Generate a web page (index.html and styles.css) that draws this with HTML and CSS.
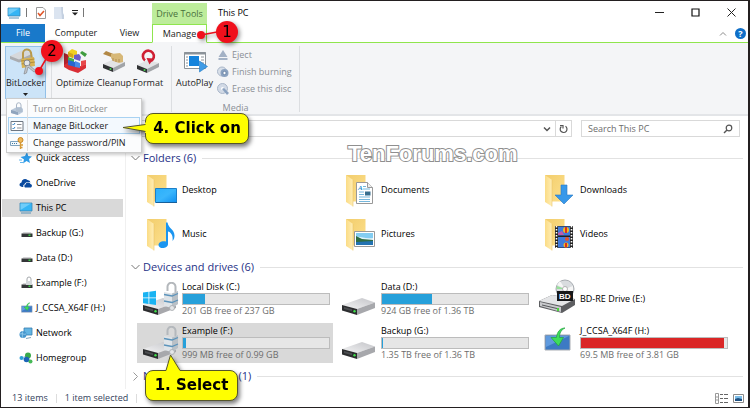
FILE: index.html
```html
<!DOCTYPE html>
<html lang="en">
<head>
	<meta charset="utf-8">
	<meta name="viewport" content="width=device-width, initial-scale=1.0">
	<title>This PC</title>
	<link rel="stylesheet" href="styles.css">
</head>
<body>
	<!-- shared icon parts -->
	<svg class="sprites" width="0" height="0" aria-hidden="true">
		<defs>
			<linearGradient id="flap" x1="0" x2="1" y2="0"><stop offset="0" stop-color="#fbdc85"/><stop offset="1" stop-color="#ffedb5"/></linearGradient>
			<linearGradient id="back" x1="0" x2="1" y1="0" y2="1"><stop offset="0" stop-color="#f2cd6c"/><stop offset="1" stop-color="#fde08d"/></linearGradient>
			<linearGradient id="metal" x1="0" x2="1" y1="1" y2="0"><stop offset="0" stop-color="#f4f4f5"/><stop offset="1" stop-color="#c3c4c8"/></linearGradient>
			<linearGradient id="screen" x1="0" x2="1" y1="0" y2="1"><stop offset="0" stop-color="#2bb0fb"/><stop offset=".5" stop-color="#3ab6fc"/><stop offset="1" stop-color="#0f8ff0"/></linearGradient>
		</defs>
		<symbol id="folder" viewBox="0 0 20 33">
			<path d="M0 1h19.500v26.500H7z" fill="url(#back)"/>
			<path d="M0 1l7 5v26.500L0 28z" fill="url(#flap)"/>
			<path d="M7 6v26.500" stroke="#e9c566" stroke-width=".6"/>
		</symbol>
		<symbol id="drive" viewBox="0 0 34 18">
			<path d="M0 7L20 0l13 4.500L15 11z" fill="url(#metal)"/>
			<path d="M15 11l18-6.500V10l-18 7z" fill="#a7a8ac"/>
			<path d="M0 7l15 4v6L0 12.500z" fill="#2c2d2f"/>
			<path d="M2 9l8 2.200v2L2 11z" fill="#4b4d50"/>
			<circle cx="12.500" cy="13.200" r="1.200" fill="#3ee04a"/>
		</symbol>
		<symbol id="lock" viewBox="0 0 16 30">
			<path d="M4.500 9V5a4 4 0 0 1 8-.5V10" fill="none" stroke="#b4b8bc" stroke-width="2"/>
			<path d="M1 10l8 1.500L15 9v13l-6 4-8-2z" fill="#dfe4e8"/>
			<path d="M9 11.500L15 9v13l-6 4z" fill="#b9c0c6"/>
			<path d="M1 12.500l8 1.500 6-2.500M1 19l8 1.500 6-2.500" fill="none" stroke="#5b93bb" stroke-width="1.300"/>
			<circle cx="9" cy="26" r="2.500" fill="#e4e6e8" stroke="#a4a8ac" stroke-width=".8"/>
		</symbol>
		<symbol id="minidrive" viewBox="0 0 12 12">
			<path d="M1 5.500L2.500 4h7L11 5.500z" fill="#d3d4d6"/>
			<path d="M.5 5.500h11V9H.5z" fill="#333537"/>
			<path d="M7.500 6.500h2V8h-2z" fill="#3cd047"/>
		</symbol>
		<symbol id="install" viewBox="0 0 28 26">
			<path d="M1 8h25v15H1z" fill="#3d7ac4" stroke="#a9adb3"/>
			<path d="M2 9h23L2 20z" fill="#5f9ade"/>
			<path d="M21 1c-5 0-8 4-8.500 9.500H7l7.500 8.500 5-8.500h-4C15.500 6 17 3 21 1z" fill="#3fdc5c" stroke="#1fa43b" stroke-width=".7"/>
		</symbol>
		<symbol id="pc" viewBox="0 0 14 12">
			<path d="M1 1h12v8H1z" fill="#35b5f5" stroke="#3a86b4" stroke-width=".8"/>
			<path d="M1.500 1.500H12L1.500 8z" fill="#6fcdfa"/>
			<path d="M2 11h10" stroke="#5a91b5"/>
		</symbol>
	</svg>

	<div class="window">
		<header class="caption">
			<div class="quick-access">
				<svg width="14" height="12"><use href="#pc"/></svg>
				<i class="bar"></i>
				<button type="button" aria-label="Properties">
					<svg width="10" height="12" viewBox="0 0 10 12"><path d="M.5.500h6.500l2.500 2.500v8.500H.5z" fill="#fff" stroke="#9a9a9a"/><path d="M2 6l2 2.500L8 4" fill="none" stroke="#e0562a" stroke-width="1.600"/></svg>
				</button>
				<button type="button" aria-label="New folder">
					<svg width="10" height="12" viewBox="0 0 10 12"><path d="M0 0h7l3 8v4H0z" fill="#dbe4f0"/><path d="M7 0h2v7l1 1v4H8z" fill="#c4d0e0"/></svg>
				</button>
				<button type="button" aria-label="Customize">
					<svg width="6" height="6" viewBox="0 0 6 6"><path d="M0 .5h6" stroke="#222"/><path d="M0 2.500h6L3 5.500z" fill="#222"/></svg>
				</button>
				<i class="bar"></i>
			</div>
			<div class="context-title">Drive Tools</div>
			<h1 class="title">This PC</h1>
			<div class="controls">
				<button type="button" aria-label="Minimize"><svg width="9" height="9"><path d="M0 4.500h9" stroke="#222"/></svg></button>
				<button type="button" aria-label="Maximize"><svg width="9" height="9"><path d="M1 1h7v7H1z" fill="none" stroke="#111" stroke-width="1.200"/></svg></button>
				<button type="button" aria-label="Close"><svg width="9" height="9"><path d="M.5.500l8 8M8.500.500l-8 8" stroke="#222"/></svg></button>
			</div>
			<button type="button" class="tab file">File</button>
			<button type="button" class="tab">Computer</button>
			<button type="button" class="tab">View</button>
			<button type="button" class="tab active">Manage</button>
			<div class="filler"></div>
			<div class="help">
				<button type="button" aria-label="Collapse ribbon"><svg width="8" height="5"><path d="M1 4.500l3-3 3 3" fill="none" stroke="#8a8a8a"/></svg></button>
				<button type="button" class="help-button">?</button>
			</div>
		</header>

		<div class="ribbon">
			<div class="group">
				<div class="dropdown">
					<button type="button" class="big pressed">
						<svg width="34" height="28" viewBox="0 0 34 28">
							<path d="M1 8l13-6 9 3v5L10 14l-9-4z" fill="#d6d8db"/>
							<path d="M1 8l9 3.500L23 6v4l-13 4.500L1 11z" fill="#a9acb0"/>
							<path d="M14 12V6a4 4 0 0 1 8-1l1 6" fill="none" stroke="#b99a4d" stroke-width="2"/>
							<path d="M12 11l13-2 1 9-13 2z" fill="#d9b455"/>
							<path d="M12 13l13.500-2M12.500 16l13.500-2" stroke="#a98635" stroke-width=".8"/>
							<circle cx="18" cy="15" r="3" fill="#e3e5e8" stroke="#85888d"/>
							<path d="M17 18l-2 8 2.500-1 1.500-6 6 5 2-1-7-6z" fill="#c4c7cb" stroke="#85888d" stroke-width=".7"/>
						</svg>
						<span>BitLocker</span>
						<svg width="5" height="3"><path d="M0 0h5L2.500 3z" fill="#222"/></svg>
					</button>
					<div class="menu" role="menu">
						<button type="button" role="menuitem" disabled>
							<svg width="14" height="14" viewBox="0 0 14 14"><path d="M1 8l6-3h4l2 2v3l-5 3-7-2z" fill="#b9c8da"/><path d="M1 8l7 2v3l-7-2z" fill="#8fa4bd"/><path d="M6.500 6V3a2 2 0 0 1 4.500 0v3" fill="none" stroke="#a9b6c6"/><path d="M6 6h6v4H6z" fill="#b0bfd0"/></svg>
							<span>Turn on BitLocker</span>
						</button>
						<button type="button" role="menuitem" class="hover">
							<svg width="14" height="14" viewBox="0 0 14 14"><path d="M1 2.500h12v9H1z" fill="#fff" stroke="#6d7782"/><path d="M2.500 5l1 1L5 4M2.500 9l1 1L5 8" fill="none" stroke="#3281c4"/><path d="M7 5.500h4.500M7 9h4.500" stroke="#8b8f94"/></svg>
							<span>Manage BitLocker</span>
						</button>
						<button type="button" role="menuitem">
							<svg width="14" height="14" viewBox="0 0 14 14"><path d="M.5 5.500h10v4H.5z" fill="#f4f8fb" stroke="#7da2be"/><path d="M2 7.500h1M4 7.500h1M6 7.500h1" stroke="#3a79a5"/><circle cx="10.500" cy="4" r="2.500" fill="#f0b95a" stroke="#c98925"/><path d="M10.500 6.500V13M10 9h3M10 11.500h2.500" stroke="#d79a35" stroke-width="1.400"/></svg>
							<span>Change password/PIN</span>
						</button>
					</div>
				</div>
			</div>
			<div class="group">
				<button type="button" class="big optimize">
					<svg width="28" height="28" viewBox="0 0 28 28">
						<path d="M3 5l5 2v14l-5-3z" fill="#b5222e"/><path d="M3 17l5-3 9 5 8-3v4l-8 5-9-3-5-3z" fill="#d92e35"/>
						<path d="M7 4l4-3 5 2v5l-4 2-5-2z" fill="#f0cf22"/><path d="M7 4l5 2v4l-5-2z" fill="#d0a51c"/>
						<path d="M7 9l6 2v5l-6-2z" fill="#43b04a"/><path d="M7 12l7 2v5l-7-2z" fill="#2867cf"/>
						<path d="M13 7l5-1 2 3-1 4-6-2z" fill="#6b5cc9"/><path d="M14 13l5 2v5l-5-1z" fill="#4a8ae6"/>
						<path d="M19 5l2-2 5 3-2 3z" fill="#3f9c3f"/><path d="M20 13l5-1v4l-5 3z" fill="#e7484a"/>
					</svg>
					<span>Optimize</span>
				</button>
				<button type="button" class="big cleanup">
					<svg width="28" height="28" viewBox="0 0 28 28">
						<path d="M3 16l11-5 11 3-12 6z" fill="#e2e3e5"/><path d="M3 16l10 4v4L3 20z" fill="#313335"/><path d="M13 20l12-6v4l-12 6z" fill="#a1a4a8"/><circle cx="10.500" cy="21" r="1" fill="#43d84d"/>
						<path d="M3 6l3-3 10 4-2 3z" fill="#b28845"/><path d="M11 6l9-1 3 3v6l-4 1-6-2-2-3z" fill="#d7b878"/><path d="M13 13v-3M16 14v-3M19 14v-3" stroke="#a8854a" stroke-width=".8"/>
					</svg>
					<span>Cleanup</span>
				</button>
				<button type="button" class="big format">
					<svg width="28" height="28" viewBox="0 0 28 28">
						<path d="M3 17l11-5 11 3-12 6z" fill="#e2e3e5"/><path d="M3 17l10 4v4L3 21z" fill="#313335"/><path d="M13 21l12-6v4l-12 6z" fill="#a1a4a8"/><circle cx="10.500" cy="22" r="1" fill="#43d84d"/>
						<path d="M11 12.500a5.500 5.500 0 1 1 6 .5" fill="none" stroke="#cf1f33" stroke-width="2.600"/><path d="M12.500 10l7 .5-4 6z" fill="#cf1f33"/>
					</svg>
					<span>Format</span>
				</button>
			</div>
			<div class="group media">
				<div class="commands">
					<button type="button" class="big autoplay">
						<svg width="28" height="28" viewBox="0 0 28 28">
							<path d="M3.500 4.500h21v16h-21z" fill="#fff" stroke="#8b9299"/><path d="M3 5.500h22" stroke="#8b9299" stroke-width="2"/>
							<path d="M5 9h2M5 12h2M5 15h2M5 18h2M20 9h3M20 12h3M20 15h3" stroke="#8b9299"/>
							<path d="M8 8h10v10H8z" fill="#1583dc"/><path d="M18.500 13v11l8-5.500z" fill="#3f9be6" stroke="#2079c5" stroke-width=".6"/>
						</svg>
						<span>AutoPlay</span>
					</button>
					<div class="small-list">
						<button type="button" disabled>
							<svg width="12" height="12" viewBox="0 0 12 12"><path d="M6 1l4.500 7h-9zM1.500 9h9v2h-9z" fill="#a3b1c5"/></svg>
							<span>Eject</span>
						</button>
						<button type="button" disabled>
							<svg width="12" height="12" viewBox="0 0 12 12"><circle cx="5" cy="5.500" r="4.500" fill="#d8dfe9" stroke="#a9b6c8"/><circle cx="7.500" cy="7" r="4" fill="#8ba2c0"/><circle cx="7.500" cy="7" r="1.700" fill="#fff" stroke="#6c86a8"/></svg>
							<span>Finish burning</span>
						</button>
						<button type="button" disabled>
							<svg width="12" height="12" viewBox="0 0 12 12"><circle cx="5.500" cy="5.500" r="5" fill="#d2dae6" stroke="#a9b6c8"/><circle cx="5.500" cy="5.500" r="1.500" fill="#fff"/><path d="M5 6l2-1 5 5-2 2z" fill="#8ba2c0"/></svg>
							<span>Erase this disc</span>
						</button>
					</div>
				</div>
				<div class="group-label">Media</div>
			</div>
		</div>

		<div class="address-row">
			<div class="address">
				<button type="button" aria-label="Previous locations"><svg width="8" height="6"><path d="M1 1.500l3 3 3-3" fill="none" stroke="#555" stroke-width="1.500"/></svg></button>
				<button type="button" class="refresh" aria-label="Refresh"><svg width="9" height="10" viewBox="0 0 9 10"><path d="M6.500 2.300A3.400 3.400 0 1 1 2.400 2.500" fill="none" stroke="#555" stroke-width="1.200"/><path d="M1 1.500h3v3" fill="none" stroke="#555" stroke-width="1.200"/></svg></button>
			</div>
			<label class="search">
				<input type="search" placeholder="Search This PC" aria-label="Search This PC">
				<svg width="10" height="10"><circle cx="6" cy="4" r="2.800" fill="none" stroke="#555" stroke-width="1.200"/><path d="M4 6L1 9" stroke="#555" stroke-width="1.500"/></svg>
			</label>
		</div>

		<div class="body">
			<nav class="tree">
				<a href="#"><svg width="14" height="14" viewBox="0 0 14 14"><path d="M8 1l1.200 4L13 5.500 10 8l1 4-3.500-2L4 12.500l1-4L1.500 6 6 5z" fill="#2d9be8"/><path d="M0 9h3M1 11.500h3" stroke="#62b5ee"/></svg>Quick access</a>
				<a href="#"><svg width="14" height="14" viewBox="0 0 14 14"><path d="M1 10a2.200 2.200 0 0 1 1.500-3.500A3.500 3.500 0 0 1 8.500 4a3 3 0 0 1 3 2.500c-4-1.500-6 1-6 2-1.500.5-1.500 1.500-1 2.500H3z" fill="#0a4a9f"/><path d="M6 11.500a1.700 1.700 0 0 1 .5-3A2.700 2.700 0 0 1 11.500 8a1.900 1.900 0 0 1 .5 3.500z" fill="#0a4a9f"/></svg>OneDrive</a>
				<a href="#" class="selected"><svg width="14" height="14" viewBox="0 0 14 12"><use href="#pc"/></svg>This PC</a>
				<a href="#"><svg width="14" height="14"><use href="#minidrive" x="2" y="2" width="12" height="12"/></svg>Backup (G:)</a>
				<a href="#"><svg width="14" height="14"><use href="#minidrive" x="2" y="2" width="12" height="12"/></svg>Data (D:)</a>
				<a href="#"><svg width="14" height="14"><use href="#minidrive" x="2" y="3" width="12" height="12"/><path d="M8 6V3a2 2 0 0 1 4 0v3" fill="none" stroke="#a5a9ad"/><path d="M7 5h6v4H7z" fill="#d4d8db"/></svg>Example (F:)</a>
				<a href="#"><svg width="14" height="14"><use href="#install" x="2" y="1" width="12" height="12"/></svg>J_CCSA_X64F (H:)</a>
				<a href="#"><svg width="14" height="14" viewBox="0 0 14 14"><path d="M5 2h8v7H5z" fill="#63b5e3" stroke="#397fae" stroke-width=".8"/><path d="M7 12.500l5-1" stroke="#7fa5bd"/><circle cx="4" cy="8.500" r="3.500" fill="#4696cd"/><path d="M1 8c2-1 4 1 6 0M4 5c-1 2-1 5 0 7" fill="none" stroke="#a7d9f3" stroke-width=".7"/></svg>Network</a>
				<a href="#"><svg width="14" height="14" viewBox="0 0 14 14"><path d="M3 7l6-3M3 7l7 4M10 4v7" stroke="#9cc8dd"/><circle cx="2.500" cy="7" r="2" fill="#2a9fd6"/><circle cx="9" cy="4.500" r="3" fill="#39a94b"/><circle cx="7.500" cy="8.500" r="2.800" fill="#1c65b8"/><circle cx="11.500" cy="10.500" r="2" fill="#46b957"/></svg>Homegroup</a>
			</nav>

			<main class="content">
				<section>
					<h2><svg width="9" height="6"><path d="M.5 1l4 4 4-4" fill="none" stroke="#777"/></svg>Folders (6)</h2>
					<div class="grid">
						<a href="#" class="item">
							<svg width="36" height="40"><use href="#folder" x="4" y="4" width="20" height="33"/><path d="M12.500 18.500h21v14h-21z" fill="url(#screen)" stroke="#1c7fc8"/><path d="M13 32.500h21" stroke="#175f9a"/></svg>
							<span class="name">Desktop</span>
						</a>
						<a href="#" class="item">
							<svg width="36" height="40"><use href="#folder" x="4" y="4" width="20" height="33"/><path d="M14.500 12.500h11l5 5v16h-16z" fill="#fff" stroke="#999"/><path d="M25.500 12.500v5h5" fill="#eee" stroke="#999"/><text x="16" y="20" class="glyph-a">A</text><path d="M21 16.500h3M21 19h7M17 22h5M17 24.500h5M17 27h11M17 29.500h11M17 31.500h11" stroke="#75b7dc"/><path d="M23 21.500h5.500v4H23z" fill="#386f8f"/></svg>
							<span class="name">Documents</span>
						</a>
						<a href="#" class="item">
							<svg width="36" height="40"><use href="#folder" x="4" y="4" width="20" height="33"/><path d="M20 15h6v10h6l-9 9-9-9h6z" fill="#3798e9" stroke="#2879c4" stroke-width=".6"/></svg>
							<span class="name">Downloads</span>
						</a>
						<a href="#" class="item">
							<svg width="36" height="40"><use href="#folder" x="4" y="4" width="20" height="33"/><path d="M23 8.500h1.500c1 6 7 7 7 13 0 2-.5 4-2 5.500 1-6-2-9-4.500-9.500V30c0 5-9.500 5.500-9.500 1 0-3.500 4.500-4.500 7.500-3.500z" fill="#1a95f0"/></svg>
							<span class="name">Music</span>
						</a>
						<a href="#" class="item">
							<svg width="36" height="40"><use href="#folder" x="4" y="4" width="20" height="33"/><path d="M12.500 17.500h20v15h-20z" fill="#fff" stroke="#999"/><path d="M14 19h17v12H14z" fill="#83cdf2"/><path d="M14 23c5-1 8 2 17 1v2H14z" fill="#dff3fb"/><path d="M14 22l6 3 11 1v2H14z" fill="#2f6c42"/><path d="M14 28l17-1v4H14z" fill="#2372b1"/></svg>
							<span class="name">Pictures</span>
						</a>
						<a href="#" class="item">
							<svg width="36" height="40"><use href="#folder" x="4" y="4" width="20" height="33"/><path d="M14 12h18v22H14z" fill="#222"/><path d="M15.500 12v22M30.500 12v22" stroke="#fff" stroke-width="1.600" stroke-dasharray="1.500 1.500"/><path d="M17 12.500h12v9H17zM17 23h12v10.500H17z" fill="#3f7bdc"/><circle cx="25" cy="16" r="3" fill="#f2b91f"/><path d="M24 13h2v6h-2z" fill="#d92f22"/><path d="M17 19l4-2 2 4h-6z" fill="#c05bab"/><circle cx="26" cy="25" r="2" fill="#e2542c"/><circle cx="25" cy="31" r="2.500" fill="#f2b91f"/><path d="M24 29h2v4.500h-2z" fill="#d92f22"/></svg>
							<span class="name">Videos</span>
						</a>
					</div>
				</section>
				<section>
					<h2><svg width="9" height="6"><path d="M.5 1l4 4 4-4" fill="none" stroke="#777"/></svg>Devices and drives (6)</h2>
					<div class="grid">
						<a href="#" class="item">
							<svg width="36" height="40"><use href="#drive" x="0" y="19" width="34" height="18"/><path d="M0 13.500l5.500-.7v5.700H0zM6.300 12.700l6.700-.9v6.700H6.300zM0 19.300h5.500V25L0 24.300zM6.300 19.300H13V26l-6.700-.9z" fill="#19b3f2"/><use href="#lock" x="20" y="3" width="16" height="30"/></svg>
							<span class="details">
								<span class="name">Local Disk (C:)</span>
								<span class="usage"><span class="used" style="width: 15%"></span></span>
								<span class="free">201 GB free of 237 GB</span>
							</span>
						</a>
						<a href="#" class="item">
							<svg width="36" height="40"><use href="#drive" x="0" y="19" width="34" height="18"/></svg>
							<span class="details">
								<span class="name">Data (D:)</span>
								<span class="usage"><span class="used" style="width: 34%"></span></span>
								<span class="free">924 GB free of 1.36 TB</span>
							</span>
						</a>
						<a href="#" class="item">
							<svg width="36" height="40"><path d="M-2 22l13-6 23 4v6l-13 8-23-6z" fill="#5d5e61"/><path d="M-2 22l13-6 23 4-13 7z" fill="#e4e5e7"/><path d="M-1 23l21 5v5L-1 27z" fill="#c9cacd"/><path d="M1 26l15 3.500" stroke="#55575a"/><path d="M16 29h2v3h-2z" fill="#4bd63a"/><circle cx="24" cy="10" r="9" fill="#d9dcdf" stroke="#a7abb0"/><path d="M24 10l-8-4 3-4zM24 10l8 4V7z" fill="#f6f6f6"/><path d="M24 10l-8.500 0 .5-3z" fill="#98df9b"/><circle cx="24" cy="10" r="2.500" fill="#fff" stroke="#999" stroke-width=".7"/><path d="M16 12h16v10H16z" fill="#17181a"/><text x="18" y="20" class="glyph-bd">BD</text></svg>
							<span class="name">BD-RE Drive (E:)</span>
						</a>
						<a href="#" class="item selected">
							<svg width="36" height="40"><use href="#drive" x="0" y="19" width="34" height="18"/><use href="#lock" x="20" y="3" width="16" height="30"/></svg>
							<span class="details">
								<span class="name">Example (F:)</span>
								<span class="usage"><span class="used" style="width: 2%"></span></span>
								<span class="free">999 MB free of 0.99 GB</span>
							</span>
						</a>
						<a href="#" class="item">
							<svg width="36" height="40"><use href="#drive" x="0" y="19" width="34" height="18"/></svg>
							<span class="details">
								<span class="name">Backup (G:)</span>
								<span class="usage"><span class="used" style="width: 1%"></span></span>
								<span class="free">1.35 TB free of 1.36 TB</span>
							</span>
						</a>
						<a href="#" class="item">
							<svg width="36" height="40"><use href="#install" x="3" y="4" width="28" height="26"/></svg>
							<span class="details">
								<span class="name">J_CCSA_X64F (H:)</span>
								<span class="usage full"><span class="used" style="width: 98%"></span></span>
								<span class="free">69.5 MB free of 3.81 GB</span>
							</span>
						</a>
					</div>
				</section>
				<section>
					<h2><svg width="9" height="9"><path d="M2.500.500l4 4-4 4" fill="none" stroke="#999"/></svg>Network locations (1)</h2>
				</section>
			</main>
		</div>

		<footer class="status">
			<span>13 items</span>
			<i class="bar"></i>
			<span>1 item selected</span>
			<i class="bar"></i>
			<div class="views">
				<button type="button" aria-label="Details view"><svg width="13" height="11"><path d="M.5.500h3v10h-3zM.5 4h3M.5 7h3" fill="none" stroke="#999"/><path d="M5 1.500h3M9 1.500h4M5 5.500h3M9 5.500h4M5 9.500h3M9 9.500h4" stroke="#666"/></svg></button>
				<button type="button" aria-label="Large icons view"><svg width="11" height="9"><path d="M.5.500h10v8H.5z" fill="#fff" stroke="#8a8a8a"/><path d="M2 2h7v5H2z" fill="#7cbde8"/><path d="M2 5l3-1 4 1v2H2z" fill="#1d4f80"/></svg></button>
			</div>
		</footer>
	</div>

	<div class="watermark">TenForums.com</div>

	<!-- step markers -->
	<svg class="marker marker-manage" width="46" height="28" viewBox="0 0 46 28"><path d="M6 17l16-3" stroke="#e8101c" stroke-width="1.500"/><circle cx="6" cy="17" r="4" fill="#f0101c"/><circle cx="32" cy="14" r="11" fill="#f0101c"/><text x="32" y="19">1</text></svg>
	<svg class="marker marker-bitlocker" width="36" height="42" viewBox="0 0 36 42"><path d="M7 34l7-12" stroke="#e8101c" stroke-width="1.500"/><circle cx="7" cy="34" r="4" fill="#f0101c"/><circle cx="20" cy="14" r="11" fill="#f0101c"/><text x="20" y="19">2</text></svg>

	<div class="callout callout-click">
		<svg class="tail" width="25" height="12"><path d="M25 1.500h-2v2L1 7l22 3v2h2z" fill="#ff0"/><path d="M23.500 3.500L1 6.500l22.500 4" fill="none" stroke="#55552a"/></svg>
		4. Click on
	</div>
	<div class="callout callout-select">
		<svg class="tail" width="16" height="18"><path d="M1 18v-2L5.500 1 15 16v2z" fill="#ff0"/><path d="M1 16.500L5.500 1 15 16.500" fill="none" stroke="#55552a"/></svg>
		1. Select
	</div>
</body>
</html>
```
FILE: styles.css
```css
* {
	box-sizing: border-box;
	margin: 0;
	padding: 0;
}

body {
	position: relative;
	font: 9px/12px "Open Sans", "Noto Sans", sans-serif;
	background: #fff;
	color: #000;
}

button {
	border: 0;
	background: none;
	font: inherit;
	color: inherit;
}

a {
	color: inherit;
	text-decoration: none;
}

svg {
	display: block;
	flex: none;
}

.sprites {
	position: absolute;
}

.window {
	display: flex;
	flex-direction: column;
	min-height: 100vh;
	border: 1px solid #231f20;
	border-right-width: 2px;
}

.bar {
	width: 1px;
	height: 9px;
	background: #777;
}

/* title bar and tabs */

.caption {
	display: grid;
	grid-template-columns: 44px 62px 45px 55px 1fr auto;
	grid-template-rows: 23px 19px;
}

.quick-access {
	grid-column: 1 / 4;
	display: flex;
	align-items: center;
	gap: 8px;
	padding-left: 6px;
}

.quick-access .bar {
	margin: 0 -3px;
}

.quick-access .bar + button {
	margin-left: 4px;
}

.context-title {
	margin-top: 2px;
	padding-top: 5px;
	background: #bdec9b;
	color: #47703b;
	text-align: center;
	white-space: nowrap;
}

.title {
	padding: 5px 0 0 11px;
	font-size: 9px;
	font-weight: normal;
	line-height: 13px;
}

.controls {
	display: flex;
	align-items: center;
	gap: 27px;
	padding-right: 12px;
}

.tab {
	color: #222;
}

.tab,
.filler,
.help {
	border-bottom: 1px solid #8fe54e;
}

.tab.file {
	background: #1979ca;
	color: #fff;
}

.tab.active {
	border: 1px solid #8fe54e;
	border-bottom-color: #f4f5f7;
}

.help {
	display: flex;
	justify-content: flex-end;
	align-items: center;
	gap: 8px;
	padding-right: 2px;
}

.help-button {
	width: 11px;
	height: 11px;
	border-radius: 50%;
	background: #0f6fc8;
	color: #fff;
	font-weight: bold;
	line-height: 11px;
}

/* ribbon */

.ribbon {
	display: flex;
	height: 73px;
	padding: 3px 0 2px 4px;
	border-bottom: 2px solid #e3e5e8;
	background: #f4f5f7;
	color: #222;
}

.group {
	display: flex;
	padding-right: 5px;
	border-right: 1px solid #dcdee1;
}

.big {
	display: flex;
	flex-direction: column;
	align-items: center;
	height: 53px;
	padding-top: 2px;
	line-height: 14px;
}

.big.pressed {
	width: 41px;
	border: 1px solid #92c0e8;
	padding-top: 1px;
	background: #cce4f8;
}

.big.pressed svg + span {
	margin-bottom: 3px;
}

.optimize {
	width: 46px;
}

.cleanup {
	width: 32px;
}

.format {
	width: 36px;
}

.autoplay {
	width: 45px;
}

.media {
	flex-direction: column;
	width: 128px;
	padding-right: 0;
}

.commands {
	display: flex;
}

.small-list {
	display: flex;
	flex-direction: column;
	gap: 5px;
	padding-top: 3px;
}

.small-list button {
	display: flex;
	align-items: center;
	gap: 3px;
	color: #8a8f96;
	white-space: nowrap;
}

.group-label {
	padding-top: 3px;
	color: #8a8f96;
	text-align: center;
}

.dropdown {
	position: relative;
}

.menu {
	position: absolute;
	top: 52px;
	left: 1px;
	z-index: 2;
	width: 136px;
	padding: 1px;
	border: 1px solid #ccc;
	background: #fbfcfd;
	box-shadow: 2px 2px 3px rgba(0, 0, 0, 0.2);
}

.menu button {
	display: flex;
	align-items: center;
	width: 100%;
	height: 17px;
	padding-left: 1px;
	border: 1px solid transparent;
	text-align: left;
	white-space: nowrap;
}

.menu button:disabled {
	color: #8d8d8d;
}

.menu .hover {
	border-color: #a8d2f2;
	background: #f3f9fe;
}

.menu span {
	margin-left: 3px;
	padding-left: 5px;
	border-left: 1px solid #dedede;
	line-height: 17px;
}

/* address bar */

.address-row {
	display: flex;
	gap: 9px;
	padding: 4px 8px 0 80px;
}

.address {
	flex: 1;
	display: flex;
	justify-content: flex-end;
	height: 17px;
	border: 1px solid #d9d9d9;
}

.address button {
	display: flex;
	justify-content: center;
	align-items: center;
	width: 16px;
}

.address .refresh {
	border-left: 1px solid #d9d9d9;
}

.search {
	display: flex;
	align-items: center;
	width: 159px;
	height: 17px;
	padding: 0 6px;
	border: 1px solid #d9d9d9;
}

.search input {
	flex: 1;
	min-width: 0;
	border: 0;
	outline: 0;
	background: none;
	font: inherit;
}

.search input::placeholder {
	color: #6d6d6d;
}

/* tree and content */

.body {
	flex: 1;
	display: flex;
}

.tree {
	display: flex;
	flex-direction: column;
	gap: 7px;
	width: 125px;
	padding: 12px 2px 0 1px;
	border-right: 1px solid #f0f0f0;
}

.tree a {
	display: flex;
	align-items: center;
	gap: 3px;
	height: 18px;
	padding-left: 17px;
	white-space: nowrap;
}

.tree .selected,
.item.selected {
	background: #d9d9d9;
}

.content {
	flex: 1;
	padding: 12px 5px 0 5px;
}

.content section {
	margin-bottom: 4px;
}

.content h2 {
	display: flex;
	align-items: center;
	gap: 3px;
	height: 18px;
	margin-bottom: 3px;
	color: #1f3287;
	font-size: 11px;
	font-weight: normal;
}

.content h2::after {
	content: "";
	flex: 1;
	height: 1px;
	margin-left: 3px;
	background: #e2e2e2;
}

.grid {
	display: grid;
	grid-template-columns: repeat(3, 1fr);
	row-gap: 4px;
	padding: 0 9px 0 6px;
}

.item {
	display: flex;
	align-items: center;
	gap: 3px;
	height: 40px;
	margin-right: 3px;
	padding: 0 3px 0 6px;
}

.item svg {
	overflow: visible;
}

.details {
	flex: 1;
	display: flex;
	flex-direction: column;
}

.usage {
	height: 12px;
	border: 1px solid #bcbcbc;
	background: #e6e6e6;
}

.used {
	display: block;
	height: 100%;
	background: #26a0da;
}

.full .used {
	background: #da2626;
}

.free {
	color: #6d6d6d;
}

.glyph-a {
	fill: #1e8ecb;
	font: italic bold 7px "Liberation Serif", serif;
}

.glyph-bd {
	fill: #fff;
	font: bold 8px "Liberation Sans", sans-serif;
}

/* status bar */

.status {
	display: flex;
	align-items: center;
	gap: 8px;
	height: 18px;
	padding: 0 4px 0 11px;
	color: #333f5c;
}

.status .bar {
	background: #ddd;
}

.views {
	display: flex;
	align-items: center;
	gap: 5px;
	margin-left: auto;
}

/* annotations */

.watermark {
	position: absolute;
	top: 141px;
	left: 348px;
	color: #fff;
	font: bold 22px/25px "Liberation Sans", sans-serif;
	-webkit-text-stroke: 2px #8f8f8f;
	paint-order: stroke fill;
}

.marker {
	position: absolute;
	z-index: 3;
	filter: drop-shadow(2px 2px 2px rgba(0, 0, 0, 0.4));
}

.marker text {
	font: 15px "DejaVu Sans", sans-serif;
	text-anchor: middle;
}

.marker-manage {
	top: 18px;
	left: 195px;
}

.marker-bitlocker {
	top: 37px;
	left: 32px;
}

.callout {
	position: absolute;
	z-index: 4;
	border: 1px solid #55552a;
	border-radius: 8px;
	background: #ff0;
	color: #000;
	font: bold 15px/29px "DejaVu Sans", sans-serif;
	text-align: center;
	white-space: nowrap;
	filter: drop-shadow(2px 3px 2px rgba(0, 0, 0, 0.5));
}

.callout-click {
	top: 113px;
	left: 145px;
	width: 104px;
}

.callout-select {
	top: 370px;
	left: 145px;
	width: 93px;
}

.tail {
	position: absolute;
}

.callout-click .tail {
	top: 7px;
	left: -24px;
}

.callout-select .tail {
	top: -17px;
	left: 19px;
}
```
